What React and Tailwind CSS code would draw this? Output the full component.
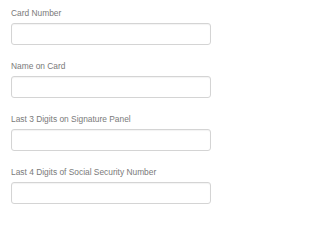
const fields = [
  "Card Number",
  "Name on Card",
  "Last 3 Digits on Signature Panel",
  "Last 4 Digits of Social Security Number",
];

export default function App() {
  return (
    <div className="w-[234px] h-[215px] bg-white pt-[7px] pl-[11px] font-['Liberation_Sans',Arial,sans-serif]">
      <div className="flex flex-col gap-[15px]">
        {fields.map((label) => (
          <div key={label} className="flex flex-col">
            <label className="text-[8.4px] leading-[12px] text-[#7a7a7a] mb-[4px]">{label}</label>
            <input
              type="text"
              className="w-[200px] h-[22px] border border-[#d4d4d4] rounded-[3px] bg-white shadow-[inset_0_1px_1px_rgba(0,0,0,0.05)] outline-none"
            />
          </div>
        ))}
      </div>
    </div>
  );
}
